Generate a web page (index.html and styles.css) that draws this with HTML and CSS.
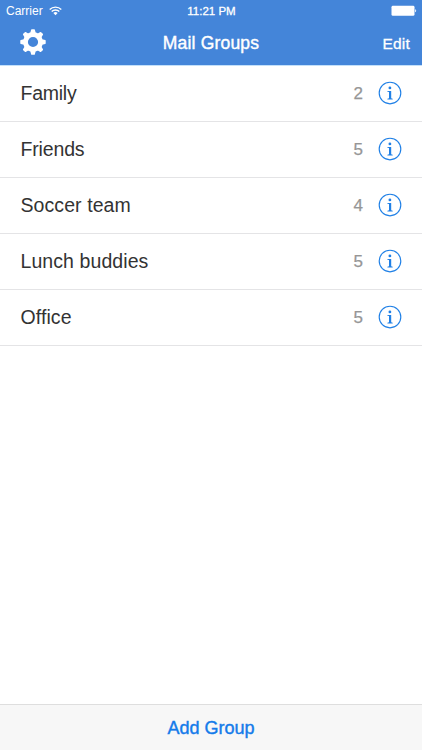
FILE: index.html
```
<!DOCTYPE html>
<html lang="en">
<head>
<meta charset="utf-8">
<title>Mail Groups</title>
<link rel="stylesheet" href="styles.css">
</head>
<body>
<svg class="defs" aria-hidden="true">
  <symbol id="info" viewBox="0 0 24 24">
    <circle cx="12" cy="12" r="10.8" fill="none" stroke="currentColor" stroke-width="1.15"/>
    <circle cx="11.9" cy="6.9" r="1.4" fill="currentColor"/>
    <path d="M9.4 9.9h3.8v7.4l1.5.4v.8H9.4v-.8l1.6-.4v-6.2l-1.6-.4z" fill="currentColor"/>
  </symbol>
</svg>
<div class="screen">
  <header class="top">
    <div class="status">
      <div class="carrier"><span>Carrier</span>
        <svg class="wifi" viewBox="0 0 13 10" fill="none" stroke="#fff" stroke-width="1.4">
          <path d="M.7 3.5a8.2 8.2 0 0 1 11.6 0M2.7 5.6a5.3 5.3 0 0 1 7.6 0"/>
          <path d="M6.5 9.2 4.4 7.1a3 3 0 0 1 4.2 0z" fill="#fff" stroke="none"/>
        </svg>
      </div>
      <div class="time">11:21 PM</div>
      <svg class="battery" viewBox="0 0 26 12">
        <rect x=".5" y=".8" width="23" height="10" rx="1.4" fill="#fff"/>
        <path d="M24.2 4.3c1.3.3 1.3 2.7 0 3z" fill="#fff"/>
      </svg>
    </div>
    <div class="nav">
      <svg class="gear" viewBox="-13 -13 26 26">
        <g fill="#fff">
          <path id="tooth" d="M-3-8-1.9-12.2Q-1.8-12.7-1.2-12.7H1.2Q1.8-12.7 1.9-12.2L3-8z"/>
          <use href="#tooth" transform="rotate(45)"/>
          <use href="#tooth" transform="rotate(90)"/>
          <use href="#tooth" transform="rotate(135)"/>
          <use href="#tooth" transform="rotate(180)"/>
          <use href="#tooth" transform="rotate(225)"/>
          <use href="#tooth" transform="rotate(270)"/>
          <use href="#tooth" transform="rotate(315)"/>
        </g>
        <circle r="7.5" fill="none" stroke="#fff" stroke-width="4.8"/>
      </svg>
      <h1 class="title">Mail Groups</h1>
      <span class="edit">Edit</span>
    </div>
  </header>
  <main class="list">
    <div class="row"><span class="name">Family</span><span class="count">2</span><svg class="info"><use href="#info"/></svg></div>
    <div class="row"><span class="name">Friends</span><span class="count">5</span><svg class="info"><use href="#info"/></svg></div>
    <div class="row"><span class="name">Soccer team</span><span class="count">4</span><svg class="info"><use href="#info"/></svg></div>
    <div class="row"><span class="name">Lunch buddies</span><span class="count">5</span><svg class="info"><use href="#info"/></svg></div>
    <div class="row"><span class="name">Office</span><span class="count">5</span><svg class="info"><use href="#info"/></svg></div>
  </main>
  <footer class="toolbar">Add Group</footer>
</div>
</body>
</html>
```
FILE: styles.css
```
* { box-sizing: border-box; }
body { margin: 0; font-family: "Liberation Sans", Arial, sans-serif; background: #fff; }
.defs { display: none; }
.screen { height: 750px; display: flex; flex-direction: column; }
.top { height: 66px; background: #4485d9; color: #fff; flex: none; border-bottom: 1px solid #c3e0fa; }
.status { display: grid; grid-template-columns: 1fr auto 1fr; align-items: center; height: 22px; padding: 0 5px 0 6px; }
.carrier { display: flex; align-items: center; gap: 6px; font-size: 12px; }
.wifi { width: 13px; height: 10px; }
.time { font-size: 11.5px; -webkit-text-stroke: .3px; }
.battery { width: 26px; height: 12px; justify-self: end; }
.nav { display: grid; grid-template-columns: 1fr auto 1fr; align-items: center; height: 41px; padding: 0 12px 0 20px; }
.gear { width: 26px; height: 26px; margin-top: -2px; }
.title { margin: 0 8px 0 0; font-size: 17.5px; line-height: 20px; font-weight: 400; letter-spacing: .2px; -webkit-text-stroke: .4px; }
.edit { justify-self: end; font-size: 15.5px; line-height: 20px; letter-spacing: .2px; margin-top: 2px; -webkit-text-stroke: .3px; }
.list { flex: 1; }
.row { height: 56px; padding: 0 20px; display: flex; align-items: center; border-bottom: 1px solid #e4e4e6; }
.name { flex: 1; font-size: 19.5px; color: #333; padding-left: .5px; letter-spacing: .08px; }
.row:first-child .name { letter-spacing: -.25px; }
.row:nth-child(2) .name { letter-spacing: -.15px; }
.count { font-size: 17px; color: #969696; -webkit-text-stroke: .25px; margin-right: 15px; }
.info { width: 24px; height: 24px; margin-top: -1px; color: #2080e6; }
.toolbar { height: 46px; flex: none; background: #f7f7f7; border-top: 1px solid #dedede; color: #147bea; font-size: 18px; line-height: 46px; text-align: center; -webkit-text-stroke: .4px; }
```
